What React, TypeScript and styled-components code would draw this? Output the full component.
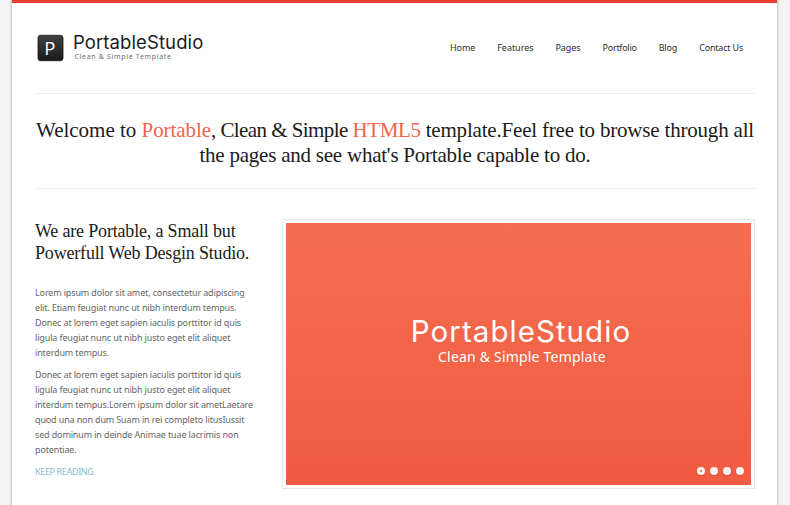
import React from 'react';
import styled, { createGlobalStyle } from 'styled-components';

const serif = '"Liberation Serif", serif';
const sans = '"Noto Sans", "Open Sans", sans-serif';
const brand = 'Inter, Roboto, sans-serif';

const GlobalStyle = createGlobalStyle`
  * { box-sizing: border-box; }
  body {
    margin: 0;
    overflow: hidden;
    background: #f4f4f4;
  }
  h1, h2, p { margin: 0; font-weight: 400; }
`;

const Page = styled.div`
  width: 765px;
  height: 505px;
  margin-left: 12px;
  padding: 0 22px;
  background: #fff;
  border-top: 3px solid #ea3c2d;
  box-shadow: 0 0 0 1px #d0d0d0, 0 0 2px 1px #c4c4c4;
`;

const Header = styled.header`
  height: 91px;
  display: flex;
  justify-content: space-between;
  align-items: flex-start;
  border-bottom: 1px solid #eee;
  width: 721px;
`;

const Logo = styled.a`
  display: flex;
  align-items: flex-start;
  gap: 9px;
  padding: 31px 0 0 3px;
`;

const LogoIcon = styled.svg`
  width: 27px;
  height: 28px;
  display: block;
`;

const IconLetter = styled.text`
  font: 500 18.5px "Open Sans", sans-serif;
  fill: #fff;
`;

const LogoText = styled.div`
  display: flex;
  flex-direction: column;
`;

const LogoName = styled.span`
  font: 400 18.5px/22px ${brand};
  letter-spacing: 0.1px;
  color: #1c1c1c;
  margin-top: -3px;
  white-space: nowrap;
`;

const LogoTagline = styled.span`
  font: 400 7px/9px ${sans};
  letter-spacing: 0.67px;
  color: #6e6e6e;
  margin: -1px 0 0 1.5px;
  white-space: nowrap;
`;

const Nav = styled.nav`
  display: flex;
  gap: 22px;
  padding: 38px 12px 0 0;
`;

const NavLink = styled.a<{ $spacing: number }>`
  font: 400 9px/14px ${sans};
  letter-spacing: ${(p) => p.$spacing}px;
  color: #2e2e2e;
  white-space: nowrap;
`;

const Intro = styled.h1`
  width: 722px;
  height: 95px;
  padding-top: 24px;
  border-bottom: 1px solid #eee;
  text-align: center;
  font: 400 21px/25px ${serif};
  color: #1b1b1b;
  white-space: pre;
`;

const Run = styled.span<{ $spacing: number; $accent?: boolean }>`
  letter-spacing: ${(p) => p.$spacing}px;
  color: ${(p) => (p.$accent ? '#f2634a' : 'inherit')};
`;

const Content = styled.main`
  display: flex;
  justify-content: space-between;
  align-items: flex-start;
  width: 721px;
  padding-top: 30px;
`;

const About = styled.section`
  width: 225px;
  padding: 1px 0 0 1px;
`;

const AboutTitle = styled.h2`
  font: 400 18px/22px ${serif};
  color: #1b1b1b;
  letter-spacing: -0.18px;
  white-space: nowrap;
  margin-bottom: 21px;
`;

const Paragraph = styled.p`
  font: 400 9px/15px ${sans};
  letter-spacing: -0.14px;
  color: #666;
  white-space: nowrap;
  margin-bottom: 7px;
`;

const ReadMore = styled.a`
  display: block;
  font: 400 9px/15px ${sans};
  letter-spacing: -0.35px;
  color: #7fbccf;
`;

const Frame = styled.div`
  width: 473px;
  height: 270px;
  padding: 3px;
  border: 1px solid #e8e8e8;
`;

const Slide = styled.div`
  height: 262px;
  display: flex;
  flex-direction: column;
  align-items: center;
  padding: 91px 8px 0 13px;
  color: #fff;
  background:
    repeating-linear-gradient(0deg, rgba(190,50,20,.025) 0 1px, transparent 1px 3px),
    linear-gradient(#f56e50, #f15c43);
`;

const SlideTitle = styled.div`
  font: 400 29.5px/34px ${brand};
  letter-spacing: 1.05px;
  white-space: nowrap;
`;

const SlideTagline = styled.div`
  font: 400 14px/18px ${sans};
  letter-spacing: 0.2px;
  margin-left: 2px;
  white-space: nowrap;
`;

const Dots = styled.div`
  display: flex;
  gap: 5px;
  margin: auto -1px 10px auto;
`;

const Dot = styled.span<{ $active?: boolean }>`
  width: 7.7px;
  height: 8px;
  border-radius: 50%;
  border: ${(p) => (p.$active ? '3px' : '4px')} solid #f8f4f3;
  box-shadow: 0 1px 1px rgba(120, 30, 10, 0.25);
`;

const links = [
  { label: 'Home', spacing: -0.1 },
  { label: 'Features', spacing: -0.04 },
  { label: 'Pages', spacing: -0.06 },
  { label: 'Portfolio', spacing: -0.27 },
  { label: 'Blog', spacing: -0.15 },
  { label: 'Contact Us', spacing: -0.2 },
];

export default function App() {
  return (
    <>
      <GlobalStyle />
      <Page>
        <Header>
          <Logo>
            <LogoIcon viewBox="0 0 27 28">
              <defs>
                <linearGradient id="tile" x1="0" y1="0" x2="0" y2="1">
                  <stop offset="0" stopColor="#414141" />
                  <stop offset="1" stopColor="#1b1b1b" />
                </linearGradient>
              </defs>
              <rect x="1" y="1.3" width="25" height="25.4" rx="2.5" fill="url(#tile)" stroke="#181818" strokeWidth="0.8" />
              <IconLetter x="7.2" y="20.5">P</IconLetter>
            </LogoIcon>
            <LogoText>
              <LogoName>PortableStudio</LogoName>
              <LogoTagline>Clean &amp; Simple Template</LogoTagline>
            </LogoText>
          </Logo>
          <Nav>
            {links.map((l) => (
              <NavLink key={l.label} $spacing={l.spacing}>{l.label}</NavLink>
            ))}
          </Nav>
        </Header>
        <Intro>
          <Run $spacing={-0.01}>Welcome to </Run>
          <Run $spacing={-0.06} $accent>Portable</Run>
          <Run $spacing={-0.57}>, Clean &amp; Simple </Run>
          <Run $spacing={-0.36} $accent>HTML5</Run>
          <Run $spacing={-0.19}> template.Feel free to browse through all</Run>
          <br />
          <Run $spacing={-0.23}>the pages and see what's Portable capable to do.</Run>
        </Intro>
        <Content>
          <About>
            <AboutTitle>
              We are Portable, a Small but<br />
              Powerfull Web Desgin Studio.
            </AboutTitle>
            <Paragraph>
              Lorem ipsum dolor sit amet, consectetur adipiscing<br />
              elit. Etiam feugiat nunc ut nibh interdum tempus.<br />
              Donec at lorem eget sapien iaculis porttitor id quis<br />
              ligula feugiat nunc ut nibh justo eget elit aliquet<br />
              interdum tempus.
            </Paragraph>
            <Paragraph>
              Donec at lorem eget sapien iaculis porttitor id quis<br />
              ligula feugiat nunc ut nibh justo eget elit aliquet<br />
              interdum tempus.Lorem ipsum dolor sit ametLaetare<br />
              quod una non dum Suam in rei completo litusIussit<br />
              sed dominum in deinde Animae tuae lacrimis non<br />
              potentiae.
            </Paragraph>
            <ReadMore>KEEP READING</ReadMore>
          </About>
          <Frame>
            <Slide>
              <SlideTitle>PortableStudio</SlideTitle>
              <SlideTagline>Clean &amp; Simple Template</SlideTagline>
              <Dots>
                <Dot $active />
                <Dot />
                <Dot />
                <Dot />
              </Dots>
            </Slide>
          </Frame>
        </Content>
      </Page>
    </>
  );
}
